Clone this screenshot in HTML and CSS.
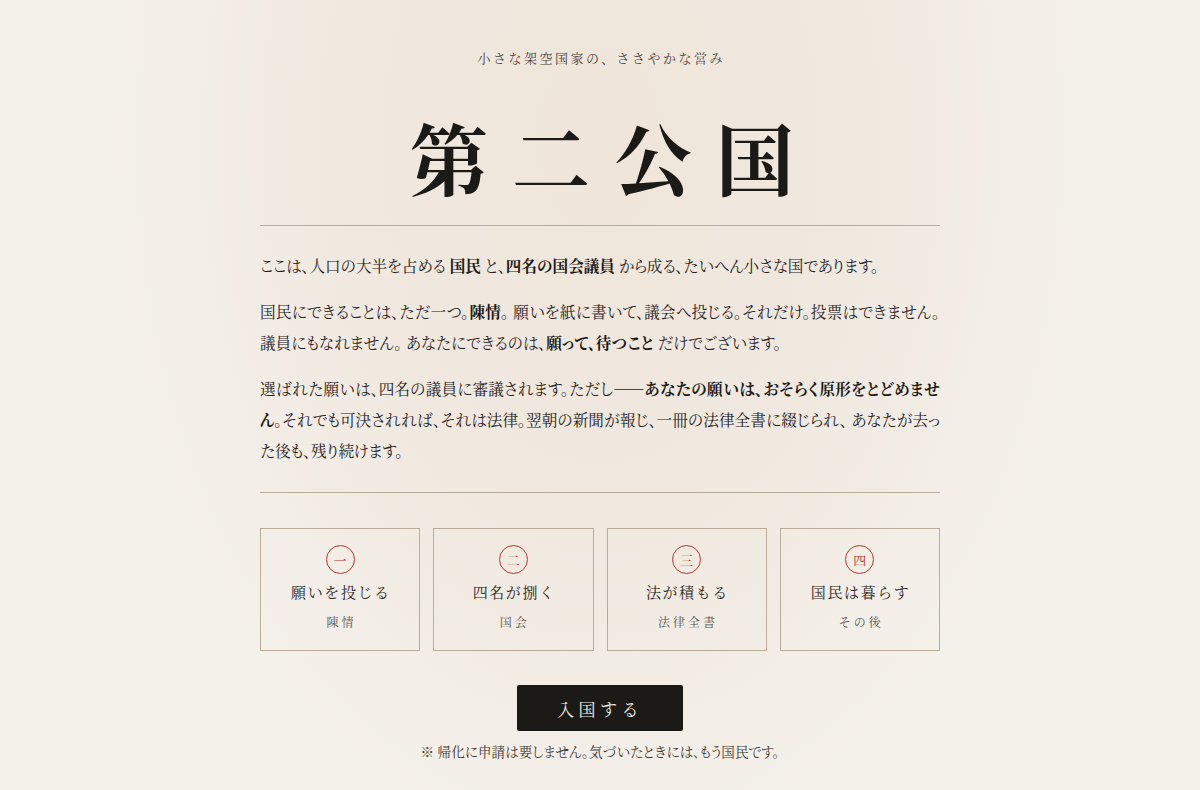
FILE: index.html
```html
<!DOCTYPE html>
<html lang="ja">
<head>
<meta charset="utf-8">
<title>第二公国</title>
<link rel="stylesheet" href="styles.css">
</head>
<body>
<main class="page">
  <p class="tagline">小さな架空国家の、ささやかな営み</p>
  <h1 class="title">第二公国</h1>
  <hr class="rule">
  <section class="intro">
    <p>ここは、人口の大半を占める <strong>国民</strong> と、<strong>四名の国会議員</strong> から成る、たいへん小さな国であります。</p>
    <p>国民にできることは、ただ一つ。<strong>陳情</strong>。 願いを紙に書いて、議会へ投じる。それだけ。投票はできません。議員にもなれません。 あなたにできるのは、<strong>願って、待つこと</strong> だけでございます。</p>
    <p>選ばれた願いは、四名の議員に審議されます。ただし——<strong>あなたの願いは、おそらく原形をとどめません</strong>。それでも可決されれば、それは法律。翌朝の新聞が報じ、一冊の法律全書に綴じられ、 あなたが去った後も、残り続けます。</p>
  </section>
  <hr class="rule">
  <ol class="steps">
    <li class="step"><span class="num">一</span><span class="step-title">願いを投じる</span><span class="step-sub">陳情</span></li>
    <li class="step"><span class="num">二</span><span class="step-title">四名が捌く</span><span class="step-sub">国会</span></li>
    <li class="step"><span class="num">三</span><span class="step-title">法が積もる</span><span class="step-sub">法律全書</span></li>
    <li class="step"><span class="num">四</span><span class="step-title">国民は暮らす</span><span class="step-sub">その後</span></li>
  </ol>
  <div class="cta">
    <button class="enter" type="button">入国する</button>
    <p class="note">※ 帰化に申請は要しません。気づいたときには、もう国民です。</p>
  </div>
</main>
</body>
</html>
```

FILE: styles.css
```css
html, body {
  margin: 0;
  padding: 0;
}
body {
  min-height: 790px;
  background-color: #f4f0ea;
  background-image: radial-gradient(ellipse 480px 700px at 50% 18%, #efe5da 0%, #f0e9e0 55%, #f4f0ea 100%);
  color: #1f1c18;
  font-family: "Noto Serif CJK JP", "Noto Serif JP", "IPAMincho", "IPAexMincho", "Noto Sans CJK JP", serif;
  font-feature-settings: "palt";
}
.page {
  width: 680px;
  margin: 0 auto;
  padding-top: 48px;
}
.tagline {
  margin: 0;
  text-align: center;
  font-size: 13px;
  letter-spacing: 2.5px;
  padding-left: 2.5px;
  color: #4a453e;
  line-height: 20px;
  font-feature-settings: normal;
}
.title {
  margin: 38px 0 0;
  text-align: center;
  font-size: 78px;
  font-weight: 700;
  line-height: 100px;
  letter-spacing: 24px;
  padding-left: 28px;
  color: #1c1a17;
  font-feature-settings: normal;
}
.rule {
  margin: 0;
  border: 0;
  height: 1px;
  background: #b9ad99;
}
.title + .rule {
  margin-top: 19px;
}
.intro {
  padding: 24px 0 26px;
}
.intro p {
  margin: 0 0 15px;
  font-size: 15.6px;
  line-height: 31px;
  text-align: justify;
  color: #26221d;
}
.intro p:last-child {
  margin-bottom: 0;
}
.intro strong {
  font-weight: 700;
  color: #1c1a17;
}
.steps {
  list-style: none;
  margin: 35px 0 0;
  padding: 0;
  display: grid;
  grid-template-columns: repeat(4, 1fr);
  gap: 13px;
}
.step {
  border: 1px solid #b9ad99;
  display: flex;
  flex-direction: column;
  align-items: center;
  padding-top: 16px;
  box-sizing: border-box;
  height: 123px;
}
.num {
  width: 27px;
  height: 27px;
  border: 1px solid #b3392c;
  border-radius: 50%;
  color: #a8382c;
  font-size: 13px;
  line-height: 27px;
  text-align: center;
  font-feature-settings: normal;
}
.step-title {
  margin-top: 6px;
  font-size: 15px;
  line-height: 24px;
  letter-spacing: 1.6px;
  padding-left: 1.6px;
  color: #2a2621;
  font-feature-settings: normal;
}
.step-sub {
  margin-top: 10px;
  font-size: 12px;
  line-height: 16px;
  letter-spacing: 3px;
  padding-left: 3px;
  color: #5a544b;
  font-feature-settings: normal;
}
.cta {
  display: flex;
  flex-direction: column;
  align-items: center;
  margin-top: 34px;
}
.enter {
  width: 166px;
  height: 46px;
  border: 0;
  border-radius: 2px;
  background: #1c1a17;
  color: #f3efe8;
  font-family: inherit;
  font-size: 17px;
  letter-spacing: 4.4px;
  padding: 0;
  font-feature-settings: normal;
  cursor: pointer;
}
.note {
  margin: 10px 0 0;
  font-size: 13.6px;
  line-height: 20px;
  color: #3f3a33;
}
```
